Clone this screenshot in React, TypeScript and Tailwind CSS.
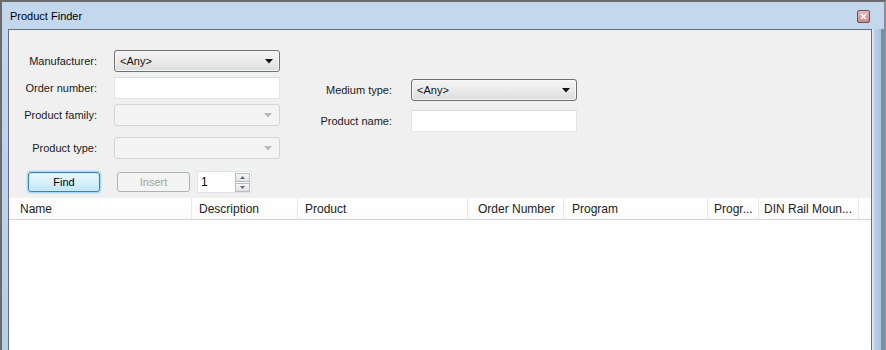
import { ReactNode } from 'react';

const Label = ({ children, w }: { children: ReactNode; w: string }) => (
  <div className={`${w} text-right text-[11px] text-[#1a1a1a] leading-none`}>{children}</div>
);

const Arrow = ({ disabled }: { disabled?: boolean }) => (
  <svg width="8" height="5" viewBox="0 0 8 5" className="shrink-0">
    <path d="M0 0 L8 0 L4 4.5 Z" fill={disabled ? '#b8b8b8' : '#111'} />
  </svg>
);

const Combo = ({ value, disabled }: { value?: string; disabled?: boolean }) =>
  disabled ? (
    <div className="w-[166px] h-[22px] flex items-center justify-end pr-[7px] rounded-[3px] border border-[#d4d4d4] bg-[#f4f4f4]">
      <Arrow disabled />
    </div>
  ) : (
    <div className="w-[166px] h-[22px] flex items-center justify-between pl-[5px] pr-[6px] rounded-[3px] border border-[#707070] bg-gradient-to-b from-[#f4f4f4] via-[#ebebeb] to-[#dcdcdc] shadow-[inset_0_0_0_1px_#f8f8f8]">
      <span className="text-[11px] text-[#111] leading-none">{value}</span>
      <Arrow />
    </div>
  );

const TextBox = () => <div className="w-[166px] h-[22px] bg-white border border-[#e2e6ea] border-t-[#d6dbe0]" />;

const cols = [
  { name: 'Name', w: 'w-[183px]', pl: 'pl-[11px]' },
  { name: 'Description', w: 'w-[106px]', pl: 'pl-[7px]' },
  { name: 'Product', w: 'w-[170px]', pl: 'pl-[7px]' },
  { name: 'Order Number', w: 'w-[96px]', pl: 'pl-[10px]' },
  { name: 'Program', w: 'w-[144px]', pl: 'pl-[8px]' },
  { name: 'Progr...', w: 'w-[51px]', pl: 'pl-[6px]' },
  { name: 'DIN Rail Moun...', w: 'w-[100px]', pl: 'pl-[5px]' },
];

export default function App() {
  return (
    <div
      className="w-[886px] h-[350px] overflow-hidden flex flex-col border-t-2 border-l-2 border-r-2 border-t-[#6b6b6b] border-l-[#6b6b6b] border-r-[#8a8f92] bg-gradient-to-b from-[#c3d7ed] to-[#b7cee7]"
      style={{ fontFamily: '"Liberation Sans", Arial, sans-serif' }}
    >
      {/* TITLE BAR */}
      <div className="h-[27px] shrink-0 flex items-center justify-between pl-[8px] pr-[14px]">
        <span className="text-[11px] text-black pt-[2px]">Product Finder</span>
        <div className="w-[13px] h-[13px] mt-[2px] rounded-[2px] border border-[#7b4a4a] bg-gradient-to-b from-[#e3b9b9] to-[#c58d8d] flex items-center justify-center">
          <svg width="7" height="7" viewBox="0 0 7 7">
            <path d="M1 1 L6 6 M6 1 L1 6" stroke="#fff" strokeWidth="1.6" />
          </svg>
        </div>
      </div>

      <div className="flex-1 flex">
        {/* CLIENT AREA */}
        <div className="ml-[6px] w-[864px] border-l border-t border-r border-[#5e6f82] bg-[#f0f0f0] flex flex-col">
          {/* FORM */}
          <div className="h-[168px] shrink-0 flex">
            <div className="w-[271px] flex flex-col pt-[20px]">
              <div className="flex items-center gap-[17px]">
                <Label w="w-[88px]">Manufacturer:</Label>
                <Combo value="<Any>" />
              </div>
              <div className="flex items-center gap-[17px] mt-[5px]">
                <Label w="w-[88px]">Order number:</Label>
                <TextBox />
              </div>
              <div className="flex items-center gap-[17px] mt-[5px]">
                <Label w="w-[88px]">Product family:</Label>
                <Combo disabled />
              </div>
              <div className="flex items-center gap-[17px] mt-[11px]">
                <Label w="w-[88px]">Product type:</Label>
                <Combo disabled />
              </div>
              <div className="flex items-center mt-[12px] pl-[19px]">
                <button className="w-[72px] h-[20px] rounded-[3px] border border-[#3c7fb1] bg-gradient-to-b from-[#eaf6fd] via-[#d9f0fc] to-[#bee6fd] shadow-[0_0_2px_1px_#8fd0f5,inset_0_0_0_1px_#cdeafb] text-[11px] text-black leading-none">
                  Find
                </button>
                <button className="ml-[17px] w-[73px] h-[20px] rounded-[3px] border border-[#adb2b5] bg-[#f4f4f4] text-[11px] text-[#a3a3a3] leading-none">
                  Insert
                </button>
                <div className="ml-[7px] w-[55px] h-[22px] flex items-center justify-between bg-white border border-[#dfe3e8] pl-[3px] pr-[1px]">
                  <span className="text-[12px] text-black leading-none">1</span>
                  <div className="flex flex-col gap-px">
                    <div className="w-[15px] h-[9px] border border-[#b5bcc4] bg-gradient-to-b from-[#f6f6f6] to-[#e2e2e2] flex items-center justify-center">
                      <svg width="5" height="3" viewBox="0 0 5 3"><path d="M0 3 L5 3 L2.5 0 Z" fill="#5a6a7a" /></svg>
                    </div>
                    <div className="w-[15px] h-[9px] border border-[#b5bcc4] bg-gradient-to-b from-[#f6f6f6] to-[#e2e2e2] flex items-center justify-center">
                      <svg width="5" height="3" viewBox="0 0 5 3"><path d="M0 0 L5 0 L2.5 3 Z" fill="#5a6a7a" /></svg>
                    </div>
                  </div>
                </div>
              </div>
            </div>

            <div className="ml-[12px] flex flex-col pt-[49px]">
              <div className="flex items-center gap-[19px]">
                <Label w="w-[100px]">Medium type:</Label>
                <Combo value="<Any>" />
              </div>
              <div className="flex items-center gap-[19px] mt-[9px]">
                <Label w="w-[100px]">Product name:</Label>
                <TextBox />
              </div>
            </div>
          </div>

          {/* LIST */}
          <div className="flex-1 bg-white flex flex-col">
            <div className="h-[22px] flex border-b border-[#d5d5d5] bg-gradient-to-b from-white to-[#fbfbfb]">
              {cols.map((c) => (
                <div key={c.name} className={`${c.w} ${c.pl} h-full flex items-center border-r border-[#e5e8ec] text-[12px] text-[#222] whitespace-nowrap overflow-hidden`}>
                  {c.name}
                </div>
              ))}
            </div>
          </div>
        </div>
        <div className="w-[2px] bg-[#dfe6ee]" />
        <div className="w-[7px] bg-gradient-to-r from-[#b9d0ea] to-[#a9c4e2]" />
        <div className="w-[3px] bg-[#6f96a4]" />
      </div>
    </div>
  );
}
